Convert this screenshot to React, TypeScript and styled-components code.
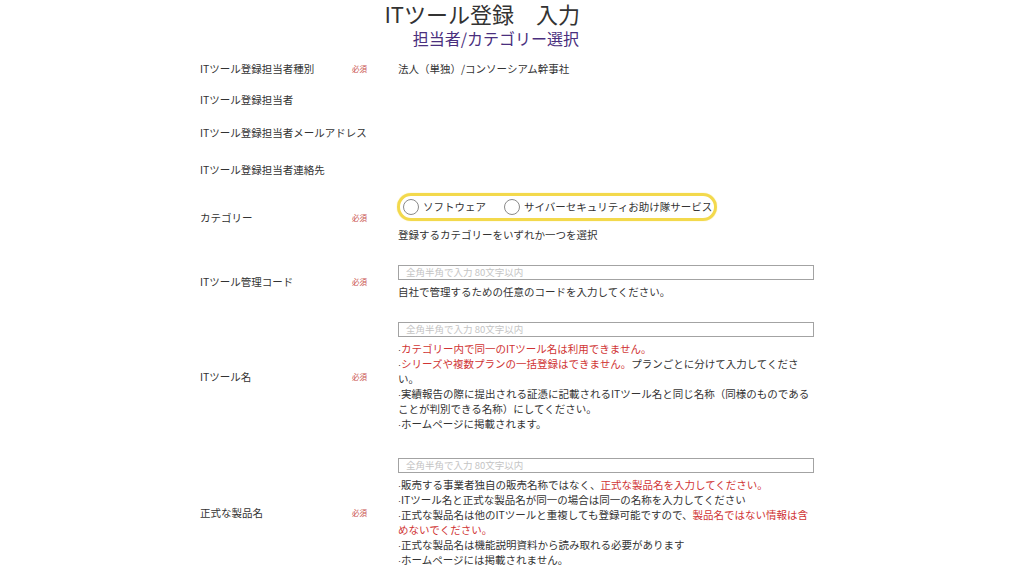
import React from "react";
import styled, { createGlobalStyle } from "styled-components";

const GlobalStyle = createGlobalStyle`
  html, body {
    margin: 0;
    padding: 0;
    background: #ffffff;
  }
  body {
    font-family: "Noto Sans CJK JP", "Noto Sans", sans-serif;
    color: #333333;
  }
`;

const Page = styled.div`
  width: 1024px;
  height: 576px;
  overflow: hidden;
  padding-left: 200px;
  box-sizing: border-box;
`;

const Header = styled.header`
  width: 380px;
  display: flex;
  flex-direction: column;
  align-items: flex-end;
`;

const Title = styled.h1`
  margin: 0;
  font-size: 22px;
  line-height: 26px;
  font-weight: 400;
  color: #333333;
`;

const SubTitle = styled.h2`
  margin: 2px 1px 0 0;
  font-size: 16px;
  line-height: 20px;
  font-weight: 400;
  color: #4a2f7e;
`;

const Form = styled.div`
  display: flex;
  flex-direction: column;
`;

const Row = styled.div<{ $mt: number }>`
  display: grid;
  grid-template-columns: 152px 46px 416px;
  align-items: center;
  margin-top: ${(p) => p.$mt}px;
`;

const Label = styled.div`
  font-size: 10.5px;
  line-height: 15px;
  color: #333333;
  white-space: nowrap;
`;

const Required = styled.span`
  font-size: 7.5px;
  line-height: 15px;
  color: #c9504c;
`;

const Value = styled.div<{ $gap?: number }>`
  display: flex;
  flex-direction: column;
  align-items: flex-start;
  gap: ${(p) => p.$gap ?? 0}px;
  font-size: 10.5px;
  line-height: 15px;
  color: #333333;
`;

const Text = styled.div``;

const Notes = styled.div`
  width: 416px;
  line-break: strict;
`;

const Dot = styled.span`
  font-family: "Liberation Sans", sans-serif;
  font-size: 9px;
  line-height: 0;
`;

const Red = styled.span`
  color: #d03434;
`;

const Input = styled.div`
  width: 416px;
  height: 15px;
  box-sizing: border-box;
  border: 1px solid #a3a3a3;
  padding-left: 7px;
  font-size: 9.5px;
  line-height: 13px;
  color: #c4c4c4;
  white-space: nowrap;
`;

const RadioGroup = styled.div`
  display: inline-flex;
  align-items: center;
  height: 28px;
  box-sizing: border-box;
  margin-left: -1px;
  padding: 0 2px 0 3px;
  border: 3px solid #f3d94c;
  border-radius: 14px;
  box-shadow: 0 0 1px #f3d94c;
`;

const RadioItem = styled.label`
  display: inline-flex;
  align-items: center;
  gap: 4px;
  & + & {
    margin-left: 18px;
  }
`;

const Circle = styled.span`
  width: 16px;
  height: 16px;
  box-sizing: border-box;
  border-radius: 50%;
  border: 1px solid #8a8a8a;
  background: #ffffff;
`;

const Bullet = ({ children }: { children: React.ReactNode }) => (
  <Text>
    <Dot>·</Dot>
    {children}
  </Text>
);

const PLACEHOLDER = "全角半角で入力 80文字以内";

export default function App() {
  return (
    <Page>
      <GlobalStyle />
      <Header>
        <Title>ITツール登録　入力</Title>
        <SubTitle>担当者/カテゴリー選択</SubTitle>
      </Header>
      <Form>
        <Row $mt={13}>
          <Label>ITツール登録担当者種別</Label>
          <Required>必須</Required>
          <Value>法人（単独）/コンソーシアム幹事社</Value>
        </Row>
        <Row $mt={16}>
          <Label>ITツール登録担当者</Label>
        </Row>
        <Row $mt={18}>
          <Label>ITツール登録担当者メールアドレス</Label>
        </Row>
        <Row $mt={22}>
          <Label>ITツール登録担当者連絡先</Label>
        </Row>
        <Row $mt={15.5}>
          <Label>カテゴリー</Label>
          <Required>必須</Required>
          <Value $gap={6.5}>
            <RadioGroup>
              <RadioItem>
                <Circle />
                ソフトウェア
              </RadioItem>
              <RadioItem>
                <Circle />
                サイバーセキュリティお助け隊サービス
              </RadioItem>
            </RadioGroup>
            <Text>登録するカテゴリーをいずれか一つを選択</Text>
          </Value>
        </Row>
        <Row $mt={22.5}>
          <Label>ITツール管理コード</Label>
          <Required>必須</Required>
          <Value $gap={4.5}>
            <Input>{PLACEHOLDER}</Input>
            <Text>自社で管理するための任意のコードを入力してください。</Text>
          </Value>
        </Row>
        <Row $mt={22.5}>
          <Label>ITツール名</Label>
          <Required>必須</Required>
          <Value $gap={4.5}>
            <Input>{PLACEHOLDER}</Input>
            <Notes>
              <Bullet>
                <Red>カテゴリー内で同一のITツール名は利用できません。</Red>
              </Bullet>
              <Bullet>
                <Red>シリーズや複数プランの一括登録はできません。</Red>
                プランごとに分けて入力してください。
              </Bullet>
              <Bullet>
                実績報告の際に提出される証憑に記載されるITツール名と同じ名称（同様のものであることが判別できる名称）にしてください。
              </Bullet>
              <Bullet>ホームページに掲載されます。</Bullet>
            </Notes>
          </Value>
        </Row>
        <Row $mt={27}>
          <Label>正式な製品名</Label>
          <Required>必須</Required>
          <Value $gap={3.5}>
            <Input>{PLACEHOLDER}</Input>
            <Notes>
              <Bullet>
                販売する事業者独自の販売名称ではなく、
                <Red>正式な製品名を入力してください。</Red>
              </Bullet>
              <Bullet>
                ITツール名と正式な製品名が同一の場合は同一の名称を入力してください
              </Bullet>
              <Bullet>
                正式な製品名は他のITツールと重複しても登録可能ですので、
                <Red>製品名ではない情報は含めないでください。</Red>
              </Bullet>
              <Bullet>正式な製品名は機能説明資料から読み取れる必要があります</Bullet>
              <Bullet>ホームページには掲載されません。</Bullet>
            </Notes>
          </Value>
        </Row>
      </Form>
    </Page>
  );
}
